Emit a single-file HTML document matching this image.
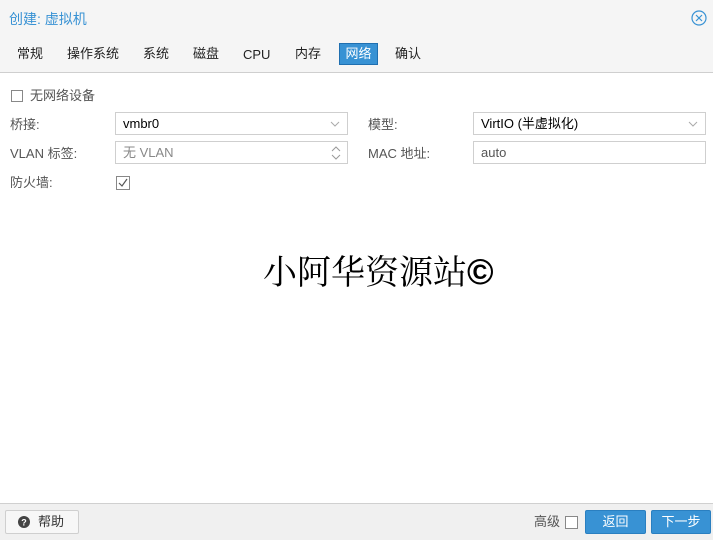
<!DOCTYPE html>
<html><head><meta charset="utf-8"><style>
*{margin:0;padding:0;box-sizing:border-box}
body{width:713px;height:540px;overflow:hidden;background:#fff;font-family:"Liberation Sans","Noto Sans CJK SC",sans-serif;font-size:13px;line-height:16px;color:#000;position:relative}
.abs{position:absolute}
.hdr{left:0;top:0;width:713px;height:73px;background:#f5f5f5;border-bottom:1px solid #cfcfcf}
.title{left:9px;top:11px;color:#3892d4;font-size:14px;line-height:17px}
.tab{top:46px;font-size:13px;color:#222;line-height:16px}
.lbl{color:#555;font-size:13px}
.field{height:23px;border:1px solid #cfcfcf;background:#fff;padding:0 0 0 7px;line-height:21px;font-size:13px}
.btn{background:#3892d4;color:#fff;border:1px solid #2a7fc0;border-radius:2px;text-align:center;line-height:22px;font-size:13px}
</style></head><body>
<div class="abs hdr"></div>
<div class="abs title">创建: 虚拟机</div>
<svg class="abs" style="left:691px;top:10px" width="16" height="16" viewBox="0 0 16 16"><circle cx="8" cy="8" r="7" fill="none" stroke="#3892d4" stroke-width="1.2"/><path d="M5 5L11 11M11 5L5 11" stroke="#3892d4" stroke-width="1.2"/></svg>
<div class="abs tab" style="left:17px">常规</div>
<div class="abs tab" style="left:67px">操作系统</div>
<div class="abs tab" style="left:143px">系统</div>
<div class="abs tab" style="left:193px">磁盘</div>
<div class="abs tab" style="left:243px;top:47px">CPU</div>
<div class="abs tab" style="left:295px">内存</div>
<div class="abs" style="left:339px;top:43px;width:39px;height:22px;background:#3892d4;border:1px solid #1f6fb0;color:#fff;text-align:center;line-height:20px">网络</div>
<div class="abs tab" style="left:395px">确认</div>

<div class="abs" style="left:11px;top:90px;width:12px;height:12px;border:1px solid #888;background:#fff"></div>
<div class="abs lbl" style="left:30px;top:88px">无网络设备</div>

<div class="abs lbl" style="left:10px;top:117px">桥接:</div>
<div class="abs field" style="left:115px;top:112px;width:233px">vmbr0<svg class="abs" style="right:7px;top:8px" width="10" height="6" viewBox="0 0 10 6"><path d="M1 1L5 5L9 1" fill="none" stroke="#aaa"/></svg></div>
<div class="abs lbl" style="left:10px;top:146px">VLAN 标签:</div>
<div class="abs field" style="left:115px;top:141px;width:233px;color:#888">无 VLAN<svg class="abs" style="right:6px;top:3px" width="10" height="16" viewBox="0 0 10 16"><path d="M1 6L5 2L9 6M1 10L5 14L9 10" fill="none" stroke="#999"/></svg></div>
<div class="abs lbl" style="left:10px;top:175px">防火墙:</div>
<svg class="abs" style="left:116px;top:176px" width="14" height="14" viewBox="0 0 14 14"><rect x=".5" y=".5" width="13" height="13" fill="#fff" stroke="#888"/><path d="M3 7L6 10L11 3" fill="none" stroke="#555" stroke-width="1.2"/></svg>

<div class="abs lbl" style="left:368px;top:117px">模型:</div>
<div class="abs field" style="left:473px;top:112px;width:233px">VirtIO (半虚拟化)<svg class="abs" style="right:7px;top:8px" width="10" height="6" viewBox="0 0 10 6"><path d="M1 1L5 5L9 1" fill="none" stroke="#aaa"/></svg></div>
<div class="abs lbl" style="left:368px;top:146px">MAC 地址:</div>
<div class="abs field" style="left:473px;top:141px;width:233px;color:#555">auto</div>

<div class="abs" style="left:263px;top:248px;font-family:'Noto Serif CJK SC',serif;font-size:34px;line-height:44px;white-space:nowrap">小阿华资源站<span style="font-family:'Liberation Sans',sans-serif;font-weight:bold;font-size:36px">©</span></div>

<div class="abs" style="left:0;top:503px;width:713px;height:37px;background:#f0f0f0;border-top:1px solid #d0d0d0"></div>
<div class="abs" style="left:5px;top:510px;width:74px;height:24px;background:#f7f7f7;border:1px solid #cfcfcf;border-radius:2px"></div>
<svg class="abs" style="left:18px;top:516px" width="12" height="12" viewBox="0 0 12 12"><circle cx="6" cy="6" r="6" fill="#444"/><text x="6" y="9.5" font-size="9" font-weight="bold" fill="#fff" text-anchor="middle" font-family="Liberation Sans">?</text></svg>
<div class="abs" style="left:38px;top:514px;color:#333">帮助</div>
<div class="abs lbl" style="left:534px;top:514px">高级</div>
<div class="abs" style="left:565px;top:516px;width:13px;height:13px;border:1px solid #888;background:#fff"></div>
<div class="abs btn" style="left:585px;top:510px;width:61px;height:24px">返回</div>
<div class="abs btn" style="left:651px;top:510px;width:60px;height:24px">下一步</div>
</body></html>
